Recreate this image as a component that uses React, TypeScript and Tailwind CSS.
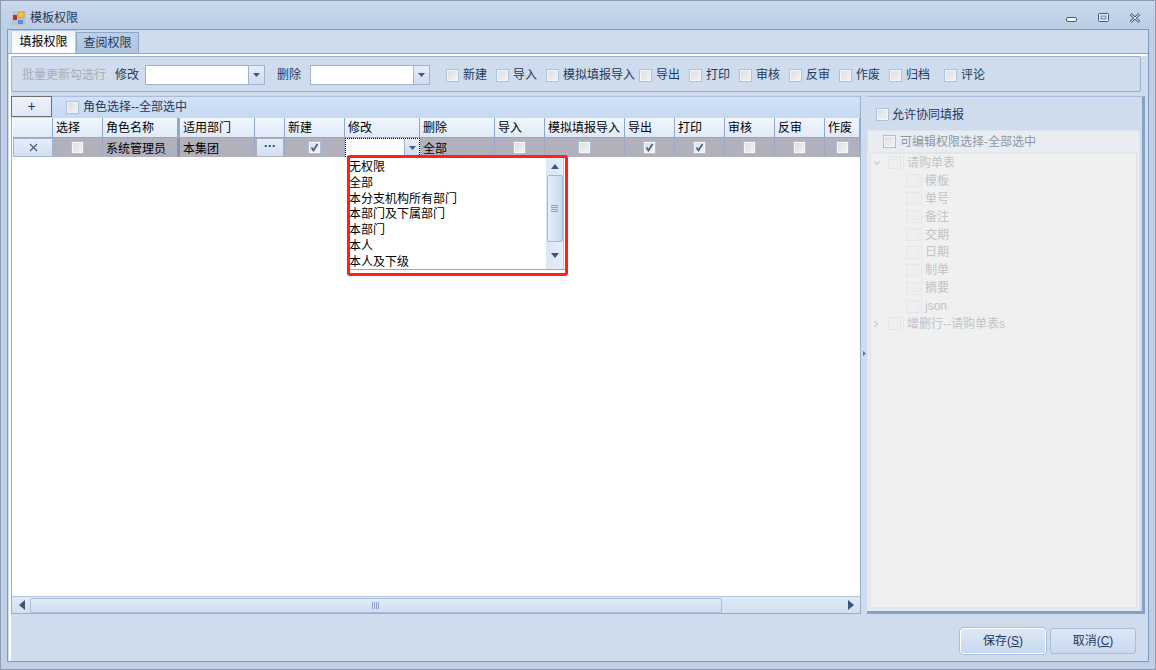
import React from 'react'

const font = "font-['Liberation_Sans','Noto_Sans_CJK_SC',sans-serif]"

function Check({ checked = false, disabled = false }: { checked?: boolean; disabled?: boolean }) {
    return (
        <span className={`relative block w-[13px] h-[13px] shrink-0 border p-[1px] ${disabled ? 'border-[#e2e5ea] bg-[#f0f0f0]' : 'border-[#abc0dc] bg-[#f4f6f9]'}`}>
            <span className={`block w-full h-full ${disabled ? 'bg-[#eeeeee]' : 'bg-gradient-to-br from-[#dedede] to-[#f2f2f2]'}`} />
            {checked && (
                <svg viewBox="0 0 13 13" className="absolute left-[-1px] top-[-1px] w-[13px] h-[13px]">
                    <path d="M3.5 6.5 L5.5 9.5 L9.5 3" fill="none" stroke="#3f5f8f" strokeWidth="1.7" />
                </svg>
            )}
        </span>
    )
}

function Arrow({ dir }: { dir: 'up' | 'down' | 'left' | 'right' }) {
    const points = { up: '0,5 4,0 8,5', down: '0,0 8,0 4,5', left: '6,0 6,10 0,5', right: '0,0 0,10 6,5' }[dir]
    const size = dir === 'up' || dir === 'down' ? 'w-[8px] h-[5px]' : 'w-[6px] h-[10px]'
    const box = dir === 'up' || dir === 'down' ? '0 0 8 5' : '0 0 6 10'
    return (
        <svg viewBox={box} className={size}>
            <polygon points={points} fill="#3e5478" />
        </svg>
    )
}

function Combo({ label, labelClass, inputClass }: { label: string; labelClass: string; inputClass: string }) {
    return (
        <>
            <span className={labelClass}>{label}</span>
            <div className={`flex h-[20px] border border-[#9db3d1] bg-white ${inputClass}`}>
                <div className="flex-1" />
                <div className="w-[16px] border-l border-[#9db3d1] bg-gradient-to-b from-[#e6eefa] to-[#cddcf0] flex items-center justify-center">
                    <svg viewBox="0 0 7 4" className="w-[7px] h-[4px]"><polygon points="0,0 7,0 3.5,4" fill="#44587a" /></svg>
                </div>
            </div>
        </>
    )
}

const toolChecks = [
    { text: '新建', cls: 'w-[50px]' },
    { text: '导入', cls: 'w-[50px]' },
    { text: '模拟填报导入', cls: 'w-[93px]' },
    { text: '导出', cls: 'w-[50px]' },
    { text: '打印', cls: 'w-[50px]' },
    { text: '审核', cls: 'w-[50px]' },
    { text: '反审', cls: 'w-[50px]' },
    { text: '作废', cls: 'w-[50px]' },
    { text: '归档', cls: 'w-[55px]' },
    { text: '评论', cls: 'w-[50px]' },
]

const columns = [
    { title: '', cls: 'w-[40px]', kind: 'del' },
    { title: '选择', cls: 'w-[50px]', kind: 'check' },
    { title: '角色名称', cls: 'w-[77px] border-r-[3px]', kind: 'text', value: '系统管理员' },
    { title: '适用部门', cls: 'w-[75px]', kind: 'text', value: '本集团' },
    { title: '', cls: 'w-[30px]', kind: 'dots' },
    { title: '新建', cls: 'w-[60px]', kind: 'check', on: true },
    { title: '修改', cls: 'w-[75px]', kind: 'edit' },
    { title: '删除', cls: 'w-[75px]', kind: 'text', value: '全部' },
    { title: '导入', cls: 'w-[50px]', kind: 'check' },
    { title: '模拟填报导入', cls: 'w-[80px]', kind: 'check' },
    { title: '导出', cls: 'w-[50px]', kind: 'check', on: true },
    { title: '打印', cls: 'w-[50px]', kind: 'check', on: true },
    { title: '审核', cls: 'w-[50px]', kind: 'check' },
    { title: '反审', cls: 'w-[50px]', kind: 'check' },
    { title: '作废', cls: 'w-[35px]', kind: 'check' },
]

const options = ['无权限', '全部', '本分支机构所有部门', '本部门及下属部门', '本部门', '本人', '本人及下级']
const fields = ['模板', '单号', '备注', '交期', '日期', '制单', '摘要', 'json']

function Cell({ col }: { col: (typeof columns)[number] }) {
    if (col.kind === 'del') {
        return (
            <div className={`${col.cls} shrink-0 border border-[#9db3d1] flex items-center justify-center bg-gradient-to-b from-[#e4edf9] to-[#d3e0f2]`}>
                <svg viewBox="0 0 9 9" className="w-[9px] h-[9px]"><path d="M1 1 L8 8 M8 1 L1 8" stroke="#41587c" strokeWidth="1.1" /></svg>
            </div>
        )
    }
    if (col.kind === 'check') {
        return (
            <div className={`${col.cls} shrink-0 border-r border-[#9fa9c4] flex items-center justify-center`}>
                <Check checked={col.on} />
            </div>
        )
    }
    if (col.kind === 'dots') {
        return (
            <div className={`${col.cls} shrink-0 border-r border-[#9fa9c4] p-[1px] pl-[2px]`}>
                <div className="h-full bg-gradient-to-b from-[#e4edf9] to-[#d3e0f2] text-center text-[#1e395b] text-[12px] leading-[14px] font-bold">···</div>
            </div>
        )
    }
    if (col.kind === 'edit') {
        return (
            <div className={`${col.cls} shrink-0 flex border border-dotted border-black bg-white`}>
                <div className="flex-1" />
                <div className="w-[15px] bg-gradient-to-b from-[#e6eefa] to-[#cddcf0] border-l border-[#9db3d1] flex items-center justify-center">
                    <svg viewBox="0 0 7 4" className="w-[7px] h-[4px]"><polygon points="0,0 7,0 3.5,4" fill="#44587a" /></svg>
                </div>
            </div>
        )
    }
    return (
        <div className={`${col.cls} shrink-0 border-r border-[#9fa9c4] pl-[3px] leading-[22px] overflow-hidden whitespace-nowrap text-black ${col.title === '角色名称' ? 'border-r-[#8a92a8]' : ''}`}>
            {col.value}
        </div>
    )
}

function TreeRow({ text, level, open }: { text: string; level: number; open?: boolean }) {
    return (
        <div className="h-[17.9px] flex items-center text-[#c2c4c8]">
            {level === 0 ? (
                <div className="w-[17px] flex justify-start pl-[2px]">
                    {open ? (
                        <svg viewBox="0 0 8 6" className="w-[8px] h-[6px]"><path d="M1 1 L4 4.5 L7 1" fill="none" stroke="#cfd1d4" strokeWidth="1.5" /></svg>
                    ) : (
                        <svg viewBox="0 0 6 8" className="w-[6px] h-[8px]"><path d="M1 1 L4.5 4 L1 7" fill="none" stroke="#cfd1d4" strokeWidth="1.5" /></svg>
                    )}
                </div>
            ) : (
                <div className="w-[35px]" />
            )}
            <Check disabled />
            <div className="h-full border-l border-[#e4e6ea] ml-[2px] pl-[3px] leading-[18px] whitespace-nowrap">{text}</div>
        </div>
    )
}

export default function App() {
    return (
        <div className={`${font} w-[1156px] h-[670px] flex flex-col overflow-hidden border border-[#8e9bae] bg-[#bed0e8] text-[12px] text-[#1e395b]`}>
            {/* title bar */}
            <div className="h-[28px] shrink-0 flex items-center pt-[6px] pl-[11px] pr-[14px] bg-gradient-to-b from-[#cadaee] to-[#b9cde6]">
                <svg viewBox="0 0 14 14" className="w-[14px] h-[14px] mr-[4px]">
                    <rect x="0" y="0" width="14" height="14" fill="#b5b9be" opacity="0.5" />
                    <rect x="1" y="4" width="4" height="5" fill="#c0302a" />
                    <rect x="6" y="1" width="6" height="6" fill="#f3c33a" stroke="#b38a1e" strokeWidth="0.6" />
                    <rect x="6" y="9" width="5" height="4" fill="#5a8de0" />
                </svg>
                <span className="text-[#1e395b]">模板权限</span>
                <div className="ml-auto flex items-center">
                    <svg viewBox="0 0 12 7" className="w-[12px] h-[7px] mt-[3px] mr-[20px]"><rect x="0.5" y="1.5" width="10" height="4" rx="1.5" fill="#fff" stroke="#3f5878" /></svg>
                    <svg viewBox="0 0 12 10" className="w-[12px] h-[10px] mr-[19px]"><rect x="0.5" y="0.5" width="10" height="8" rx="1" fill="#e6eefa" stroke="#3f5878" /><rect x="3" y="3" width="5" height="3" fill="#cfdcee" stroke="#3f5878" strokeWidth="0.7" /></svg>
                    <svg viewBox="0 0 12 10" className="w-[12px] h-[10px]"><path d="M1.5 1 L10.5 9 M10.5 1 L1.5 9" stroke="#3f5878" strokeWidth="2.6" /><path d="M1.5 1 L10.5 9 M10.5 1 L1.5 9" stroke="#ffffff" strokeWidth="1" /></svg>
                </div>
            </div>

            {/* body */}
            <div className="flex-1 ml-[6px] mr-[6px] mb-[7px] min-h-0 flex flex-col border border-[#7f98bc] bg-[#cfdcee]">
                {/* tabs */}
                <div className="h-[23px] shrink-0 flex items-end pl-[3px] leading-[20px]">
                    <div className="w-[65px] h-[23px] bg-gradient-to-b from-[#eef3fa] to-white border-t border-x border-[#b9cde6] text-center text-black leading-[23px]">填报权限</div>
                    <div className="w-[63px] h-[21px] bg-gradient-to-b from-[#bed0e8] to-[#aec3df] border border-[#8ea7c9] border-b-0 text-center text-[#1e395b]">查阅权限</div>
                </div>

                <div className="flex-1 min-h-0 flex flex-col border-t border-t-[#8ea7c9]">
                    <div className="flex-1 min-h-0 mx-[1px] border-l-2 border-l-white border-t-2 border-t-white flex flex-col">
                        {/* batch toolbar */}
                        <div className="w-[1130px] h-[36px] shrink-0 flex items-center pt-[2px] border border-[#97afd0] rounded-[2px] text-[#1e395b]">
                            <span className="ml-[10px] w-[93px] text-[#a9adb3]">批量更新勾选行</span>
                            <Combo label="修改" labelClass="w-[30px]" inputClass="w-[120px]" />
                            <Combo label="删除" labelClass="ml-[12px] w-[33px]" inputClass="w-[120px]" />
                            <div className="ml-[16px] flex">
                                {toolChecks.map(item => (
                                    <label key={item.text} className={`${item.cls} flex items-center gap-[4px] whitespace-nowrap`}>
                                        <Check />
                                        <span>{item.text}</span>
                                    </label>
                                ))}
                            </div>
                        </div>

                        {/* main split */}
                        <div className="mt-[4px] h-[518px] shrink-0 flex">
                            {/* grid panel */}
                            <div className="relative w-[850px] shrink-0 h-full flex flex-col border border-[#95aed0] border-t-[#a9bfdc] bg-white">
                                <div className="h-[20px] shrink-0 flex items-center bg-gradient-to-b from-[#d3e2f6] to-[#c5d9f1]">
                                    <div className="w-[41px] h-[21px] -ml-[1px] -mt-[1px] border border-[#6f6f6f] bg-gradient-to-b from-[#eef3fb] to-[#dde7f6] text-center text-[14px] leading-[18px] text-[#1e2f55]">+</div>
                                    <div className="ml-[14px] flex items-center gap-[4px]"><Check /><span>角色选择--全部选中</span></div>
                                </div>
                                <div className="pl-[1px]">
                                    <div className="h-[21px] flex border-y border-y-[#d1dceb] border-b-[#8fa9cc] bg-gradient-to-b from-[#f2f7fe] to-[#dfe9f8] text-black">
                                        {columns.map((col, i) => (
                                            <div key={i} className={`${col.cls} shrink-0 border-r border-[#8fa9cc] pl-[3px] leading-[20px] whitespace-nowrap overflow-hidden`}>{col.title}</div>
                                        ))}
                                    </div>
                                    <div className="h-[19px] flex bg-[#b0b1bd]">
                                        {columns.map((col, i) => <Cell key={i} col={col} />)}
                                    </div>
                                </div>
                                <div className="flex-1" />
                                {/* horizontal scrollbar */}
                                <div className="h-[17px] shrink-0 flex items-center bg-gradient-to-b from-[#e0eaf6] to-[#d2dff0] border-t border-[#b4c6de]">
                                    <div className="w-[18px] flex justify-center pl-[1px]"><Arrow dir="left" /></div>
                                    <div className="w-[692px] h-[15px] rounded-[2px] border border-[#a9bedb] bg-gradient-to-b from-[#e3ecf8] to-[#cfddf0] flex items-center justify-center">
                                        <svg viewBox="0 0 8 7" className="w-[8px] h-[7px]"><path d="M0.5 0V7M2.5 0V7M4.5 0V7M6.5 0V7" stroke="#8ba3c4" /></svg>
                                    </div>
                                    <div className="flex-1" />
                                    <div className="w-[18px] flex justify-center"><Arrow dir="right" /></div>
                                </div>

                                {/* dropdown, sits over the grid */}
                                <div className="absolute left-[335px] top-[58px] w-[221px] h-[121px] border-[3px] border-[#ff2018] rounded-[3px] bg-white text-black overflow-hidden">
                                    <div className="flex h-[113px] border-b border-[#a8a8a8] -mt-[1px] overflow-hidden">
                                        <div className="flex-1 -ml-[1px] pt-[2px]">
                                            {options.map(opt => (
                                                <div key={opt} className="h-[15.8px] leading-[16px] whitespace-nowrap">{opt}</div>
                                            ))}
                                        </div>
                                        <div className="w-[18px] mr-[1px] flex flex-col items-center bg-gradient-to-r from-[#dce7f5] to-[#e4edf8] border-r border-[#c0c8d4]">
                                            <div className="h-[18px] flex items-center justify-center"><Arrow dir="up" /></div>
                                            <div className="w-[16px] h-[67px] rounded-[2px] border border-[#a3b9d8] bg-gradient-to-r from-[#e6eef9] to-[#c9d9ee] flex items-center justify-center">
                                                <svg viewBox="0 0 7 8" className="w-[7px] h-[8px]"><path d="M0 0.5H7M0 2.5H7M0 4.5H7M0 6.5H7" stroke="#8ba3c4" /></svg>
                                            </div>
                                            <div className="flex-1 flex items-center justify-center"><Arrow dir="down" /></div>
                                        </div>
                                    </div>
                                </div>
                            </div>

                            {/* splitter */}
                            <div className="w-[6px] shrink-0 flex items-center justify-center pl-[1px]">
                                <svg viewBox="0 0 3 5" className="w-[3px] h-[5px] mt-[-4px]"><polygon points="0,0 0,5 3,2.5" fill="#5b7aa6" /></svg>
                            </div>

                            {/* right panel */}
                            <div className="w-[278px] shrink-0 h-full flex flex-col border-r-[3px] border-b-[3px] border-r-[#88a2c6] border-b-[#88a2c6] border-t border-t-[#a9bfdc] pr-[2px]">
                                <div className="h-[33px] shrink-0 flex items-center pl-[9px] pt-[2px] gap-[3px]"><Check /><span>允许协同填报</span></div>
                                <div className="flex-1 min-h-0 flex flex-col bg-[#f0f0f0] border border-[#dfe5ee]">
                                    <div className="h-[21px] shrink-0 flex items-center pl-[15px] gap-[4px] bg-[#e9ecf1] text-[#8d98a8]"><Check /><span>可编辑权限选择-全部选中</span></div>
                                    <div className="flex-1 mx-[1px] mb-[1px] border-2 border-[#e2e6ec]">
                                        <TreeRow text="请购单表" level={0} open />
                                        {fields.map(f => <TreeRow key={f} text={f} level={1} />)}
                                        <TreeRow text="增删行--请购单表s" level={0} />
                                    </div>
                                </div>
                            </div>
                        </div>

                        {/* footer buttons */}
                        <div className="flex-1 flex items-start justify-end gap-[4px] pt-[14px] pr-[11px]">
                            <div className="w-[86px] h-[26px] rounded-[3px] border border-white outline outline-1 outline-[#a9bedb] bg-gradient-to-b from-[#dde8f6] to-[#c8d9ef] text-center leading-[24px]">保存(<span className="underline">S</span>)</div>
                            <div className="w-[86px] h-[26px] rounded-[3px] border border-[#a9bedb] bg-gradient-to-b from-[#dde8f6] to-[#c8d9ef] text-center leading-[24px]">取消(<span className="underline">C</span>)</div>
                        </div>
                    </div>
                </div>
            </div>
        </div>
    )
}
